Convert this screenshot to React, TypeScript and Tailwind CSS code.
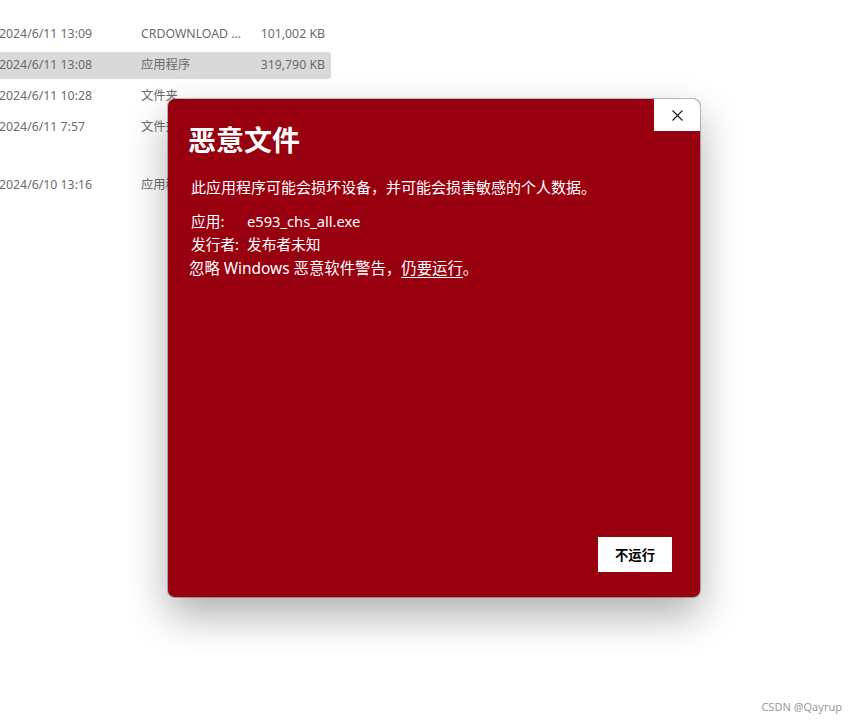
import React from 'react';

interface FileRow {
  date: string;
  kind: string;
  size?: string;
  selected?: boolean;
  gapBefore?: boolean;
}

const rows: FileRow[] = [
  { date: '2024/6/11 13:09', kind: 'CRDOWNLOAD ...', size: '101,002 KB' },
  { date: '2024/6/11 13:08', kind: '应用程序', size: '319,790 KB', selected: true },
  { date: '2024/6/11 10:28', kind: '文件夹' },
  { date: '2024/6/11 7:57', kind: '文件夹' },
  { date: '2024/6/10 13:16', kind: '应用程序', gapBefore: true },
];

const uiFont = { fontFamily: '"Noto Sans", "Noto Sans CJK SC", sans-serif' };

const CloseIcon: React.FC = () => (
  <svg width="11" height="11" viewBox="0 0 11 11" fill="none" stroke="#1a1a1a" strokeWidth="1.1">
    <path d="M0.5 0.5 L10.5 10.5 M10.5 0.5 L0.5 10.5" />
  </svg>
);

const App: React.FC = () => {
  return (
    <div className="relative w-full h-[725px] bg-white overflow-hidden" style={uiFont}>
      {/* file list behind the dialog */}
      <div className="flex flex-col gap-1 pt-[21px] w-[331px]">
        {rows.map((r) => (
          <div
            key={r.date}
            className={`flex items-center h-[27px] text-[12.3px] text-[#6b6b6b] rounded-r-[3px] ${r.selected ? 'bg-[#d9d9d9]' : ''} ${r.gapBefore ? 'mt-[27px]' : ''}`}
          >
            <span className="w-[142px] -ml-[1px] whitespace-nowrap">{r.date}</span>
            <span className="w-[110px] whitespace-nowrap overflow-hidden">{r.kind}</span>
            <span className="w-[74px] text-right whitespace-nowrap">{r.size ?? ''}</span>
          </div>
        ))}
      </div>

      {/* SmartScreen style dialog */}
      <div className="absolute left-[168px] top-[99px] w-[532px] h-[498px] bg-[#99000f] rounded-[7px] ring-1 ring-black/25 shadow-[0_18px_42px_rgba(0,0,0,0.32)] flex flex-col text-white">
        <button className="absolute right-0 top-0 w-[46px] h-[32px] bg-white rounded-tr-[7px] flex items-center justify-center">
          <CloseIcon />
        </button>

        <div className="flex flex-col pt-[22px] pl-[20px] flex-1">
          <h1 className="text-[28px] leading-[36px] font-bold" style={{ fontFamily: '"Noto Sans CJK SC", sans-serif' }}>
            恶意文件
          </h1>
          <p className="mt-[19px] pl-[3px] text-[15px] leading-[22px]">
            此应用程序可能会损坏设备，并可能会损害敏感的个人数据。
          </p>
          <div className="mt-[12px] pl-[3px] grid grid-cols-[56px_1fr] text-[14.7px] leading-[23px]">
            <span>应用:</span>
            <span>e593_chs_all.exe</span>
            <span>发行者:</span>
            <span>发布者未知</span>
          </div>
          <p className="mt-[1px] pl-[1px] text-[15.4px] leading-[24px]">
            忽略 Windows 恶意软件警告，<span className="underline underline-offset-[3px]">仍要运行</span>。
          </p>
          <div className="flex-1" />
          <div className="flex justify-end pr-[28px] pb-[25px]">
            <button className="w-[74px] h-[35px] bg-white text-black text-[13.3px] font-bold" style={{ fontFamily: '"Noto Sans CJK SC", sans-serif' }}>
              不运行
            </button>
          </div>
        </div>
      </div>

      <div className="absolute right-[15px] bottom-[10px] text-[11px] text-[#9a9a9a]">CSDN @Qayrup</div>
    </div>
  );
};

export default App;
